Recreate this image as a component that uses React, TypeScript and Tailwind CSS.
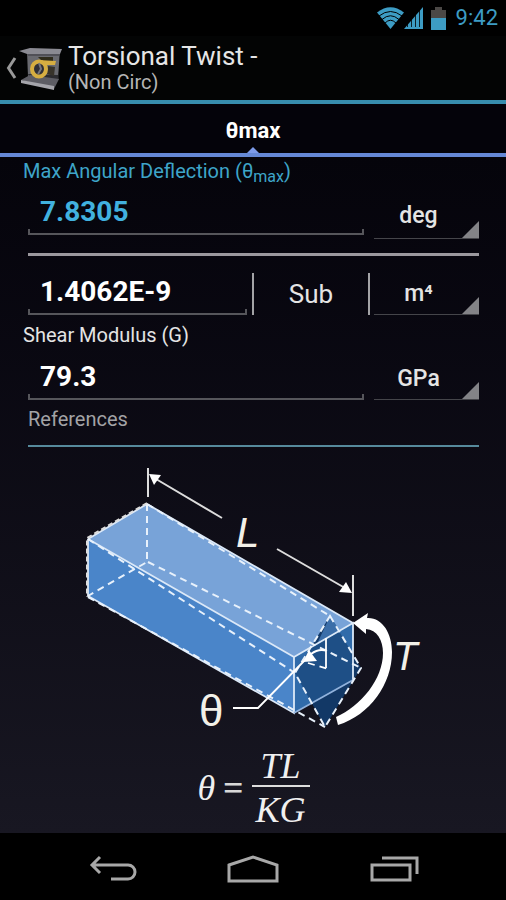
import React, { useState } from 'react';

const DASH = '7 5';

function StatusBar() {
  return (
    <div className="flex h-9 items-center justify-end bg-black pr-2 text-[#3d9cc4]">
      <svg width="27" height="22" viewBox="0 0 27 22" aria-hidden="true">
        <path d="M0 5.500 Q13.500 -5 27 5.500 L13.500 22 Z" fill="currentColor" />
        <g fill="none" stroke="#000" strokeWidth="1">
          <path d="M2 9 Q13.500 0 25 9" />
          <path d="M5 12.500 Q13.500 5 22 12.500" />
          <path d="M8 16 Q13.500 10.500 19 16" />
        </g>
      </svg>
      <svg width="19" height="22" viewBox="0 0 19 22" aria-hidden="true">
        <path d="M0 22L19 0V22Z" fill="currentColor" />
        <path d="M3.500 14V20M7.500 10V20M11.500 6V20M15.500 2V20" stroke="#000" strokeWidth="0.800" />
      </svg>
      <svg className="ml-2" width="15" height="23" viewBox="0 0 15 23" aria-hidden="true">
        <path d="M4 0H11V3H15V11H0V3H4Z" fill="#4b4846" />
        <path d="M0 11H15V23H0Z" fill="currentColor" />
      </svg>
      <span className="ml-[10px] text-[22px] leading-6">9:42</span>
    </div>
  );
}

function BeamIcon() {
  return (
    <svg width="44" height="46" viewBox="0 0 44 46" aria-hidden="true">
      <path d="M9 6L42 4L40 34L10 32Z" fill="#696a70" />
      <path d="M1 6L12 3L44 4L42 9L9 9Z" fill="#8a8a92" />
      <path d="M9 9L42 9L41 11L10 11Z" fill="#505057" />
      <path d="M10 29L40 30L41 35L12 33Z" fill="#2b2b2f" />
      <path d="M3 35L12 30L41 34L36 44Z" fill="#5d5d64" />
      <path d="M3 35L36 41V45L3 38Z" fill="#a5a5ab" />
      <path d="M20 12H35V16H24Z" fill="#2f2c1c" />
      <path d="M30 21L37 22L36 31L29 29Z" fill="#37332a" />
      <ellipse cx="21" cy="24" rx="7" ry="7.500" fill="#303036" stroke="#d6ae41" strokeWidth="4" />
      <path d="M20 15L38 16L37 20L26 20Z" fill="#d6ae41" />
      <path d="M21 18L23 24L20 29" fill="none" stroke="#77777d" strokeWidth="2" />
    </svg>
  );
}

function Header() {
  return (
    <header className="flex h-[68px] items-center border-b-4 border-[#378dae] bg-[#030404]">
      <a href="#" aria-label="Navigate up" className="flex items-center pl-[6px]">
        <svg width="12" height="24" viewBox="0 0 12 24" fill="none" stroke="#999" strokeWidth="3" aria-hidden="true">
          <path d="M9 2L2.500 12L9 22" />
        </svg>
        <BeamIcon />
      </a>
      <div className="ml-[6px]">
        <h1 className="text-[26px] leading-7 text-[#e6e6e6]">Torsional Twist -</h1>
        <p className="text-[20px] leading-6 text-[#b5b5b5]">(Non Circ)</p>
      </div>
    </header>
  );
}

function TabBar() {
  return (
    <div role="tablist" className="flex h-[53px] border-b-4 border-[#6588d6] bg-[#04030a]">
      <button role="tab" aria-selected="true" className="relative flex-1 pt-1 text-[22px] font-bold text-white">
        θmax
        <svg className="absolute bottom-0 left-1/2 -translate-x-1/2" width="12" height="6" viewBox="0 0 12 6" fill="#7d9bea" aria-hidden="true">
          <path d="M6 0L12 6H0Z" />
        </svg>
      </button>
    </div>
  );
}

type ValueInputProps = {
  id: string;
  value: string;
  onChange: (value: string) => void;
  label?: string;
  blue?: boolean;
};

function ValueInput({ id, value, onChange, label, blue }: ValueInputProps) {
  return (
    <div className="flex min-w-0 flex-1 flex-col">
      <input
        id={id}
        aria-label={label}
        value={value}
        onChange={e => onChange(e.target.value)}
        className={`h-11 w-full bg-transparent px-3 pt-2 text-[28px] font-bold outline-none ${blue ? 'text-[#41b1df]' : 'text-white'}`}
      />
      <div className="h-[6px] border-x-2 border-b-2 border-[#56565b]" />
    </div>
  );
}

function UnitSelect({ label, options }: { label: string; options: string[] }) {
  return (
    <div className="relative w-[105px] shrink-0 border-b border-[#45454a]">
      <select
        aria-label={label}
        className="h-full w-full appearance-none bg-transparent pt-[10px] pr-4 text-center text-[23px] font-medium text-[#e4e4e4] outline-none [text-align-last:center]"
      >
        {options.map(unit => (
          <option key={unit}>{unit}</option>
        ))}
      </select>
      <svg className="pointer-events-none absolute right-0 bottom-0" width="17" height="17" viewBox="0 0 17 17" fill="#838387" aria-hidden="true">
        <path d="M17 0V17H0Z" />
      </svg>
    </div>
  );
}

function TwistDiagram() {
  return (
    <svg width="347" height="274" viewBox="80 461 347 274" role="img" aria-label="Twisted rectangular bar">
      {/* faces */}
      <path d="M88 539L147 504L353 623L294 657Z" fill="#78a3d8" />
      <path d="M88 539L294 657V713L88 596Z" fill="#4a85c9" />
      <path d="M294 657L353 623V680L294 713Z" fill="#3670af" />

      {/* twisted end */}
      <path d="M330 616L361 668L325 727L295 673Z" fill="#123866" />
      <path d="M294 657L353 623V680L294 713Z" fill="#2a65a6" opacity="0.5" />
      <path d="M330 616L340 631L317 644Z" fill="#3b6ea9" />

      {/* solid edges */}
      <g fill="none" stroke="#dce9f8" strokeWidth="1.800">
        <path d="M88 539L147 504L353 623" />
        <path d="M88 539V596L294 713V657L88 539" />
        <path d="M294 657L353 623V680" />
        <path d="M294 713L353 680" stroke="#91b2dc" />
      </g>

      {/* dashed edges */}
      <g fill="none" stroke="#e8f1fb" strokeWidth="2" strokeDasharray={DASH}>
        <path d="M147 504V562L88 596" />
        <path d="M147 504L330 616" />
        <path d="M148 562L361 668" />
        <path d="M88 539L295 673" />
        <path d="M88 597L325 727" />
        <path d="M330 616L361 668L325 727L295 673Z" />
      </g>
      <path d="M147 503L87 538V597" fill="none" stroke="#ddd" strokeWidth="2" strokeDasharray="5 3" />

      {/* length dimension */}
      <g fill="none" stroke="#ddd" strokeWidth="2">
        <path d="M148 468V497M156 479L222 518" />
        <path d="M353 575V616M277 549L345 588" />
      </g>
      <path d="M149 474L161 475L154 485Z" fill="#fff" />
      <path d="M352 593L346 582L339 592Z" fill="#fff" />

      {/* angle */}
      <g fill="none" stroke="#fff" strokeWidth="1.800">
        <path d="M233 708H258L307 658" />
        <path d="M326 638V668M327 651Q319 648 311 654" />
        <path d="M308 663L328 669" strokeDasharray={DASH} />
      </g>
      <path d="M303 662L309 650L317 661Z" fill="#fff" />

      {/* torque */}
      <path d="M353 623L368 613L367 618C382 617 392 633 392 652C392 684 370 715 338 725L336 717C361 706 383 679 383 653C383 640 377 630 366 629L366 634Z" fill="#fff" />

      <g fill="#f2f0e8" className="font-['Liberation_Sans',sans-serif]">
        <text x="236" y="547" fontSize="42" fontStyle="italic">L</text>
        <text x="393" y="670" fontSize="40" fontStyle="italic">T</text>
        <text x="199" y="726" fontSize="44">θ</text>
      </g>
    </svg>
  );
}

function Formula() {
  return (
    <div className="mt-3 flex items-center gap-2 font-['Liberation_Serif',serif] text-[36px] leading-[38px] text-[#f0f0f0] italic">
      <span>θ</span>
      <span className="font-bold text-[#d8d8d8] not-italic">=</span>
      <span className="flex flex-col text-center">
        <span className="border-b-2 border-[#ddd] px-1">TL</span>
        <span className="px-1 pt-1">KG</span>
      </span>
    </div>
  );
}

function NavBar() {
  return (
    <nav className="flex h-[67px] shrink-0 items-center justify-center gap-[88px] bg-black pt-1">
      <button aria-label="Back">
        <svg width="50" height="28" viewBox="0 0 50 28" fill="none" stroke="#a8a8a8" strokeWidth="3" aria-hidden="true">
          <path d="M13 2L5 10L13 18M5 10H41A7 7 0 0 1 41 24H24" />
        </svg>
      </button>
      <button aria-label="Home">
        <svg width="54" height="30" viewBox="0 0 54 30" fill="none" stroke="#a8a8a8" strokeWidth="3" aria-hidden="true">
          <path d="M4 11L28 3L52 11V27H4Z" />
        </svg>
      </button>
      <button aria-label="Recent apps">
        <svg width="52" height="28" viewBox="0 0 52 28" fill="none" stroke="#a8a8a8" strokeWidth="3" aria-hidden="true">
          <path d="M5 10H43V25H5ZM15 3H50V19" />
        </svg>
      </button>
    </nav>
  );
}

export default function App() {
  const [deflection, setDeflection] = useState('7.8305');
  const [constant, setConstant] = useState('1.4062E-9');
  const [modulus, setModulus] = useState('79.3');

  return (
    <div className="flex min-h-screen flex-col bg-black font-[Roboto,sans-serif]">
      <StatusBar />
      <Header />
      <TabBar />

      <main className="flex flex-1 flex-col bg-linear-to-b from-[#05040b] to-[#181722] pr-[27px] pl-7">
        <label htmlFor="deflection" className="-ml-[5px] h-7 text-[20px] leading-7 text-[#3ea5c9]">
          Max Angular Deflection (θ<sub className="text-[16px] leading-none">max</sub>)
        </label>
        <div className="flex h-[54px] gap-[10px]">
          <ValueInput id="deflection" value={deflection} onChange={setDeflection} blue />
          <UnitSelect label="Deflection unit" options={['deg', 'rad']} />
        </div>

        <hr className="mt-[14px] border-t-3 border-[#9b989e]" />

        <div className="mt-[9px] flex">
          <ValueInput id="constant" label="Torsional constant" value={constant} onChange={setConstant} />
          <button className="mt-2 mr-1 ml-[5px] w-[118px] shrink-0 border-x-2 border-[#a3a3a6] text-[26px] text-[#e4e4e4]">
            Sub
          </button>
          <UnitSelect label="Torsional constant unit" options={['m⁴', 'mm⁴']} />
        </div>

        <label htmlFor="modulus" className="-ml-[5px] h-[35px] text-[20px] leading-10 text-[#e4e4e4]">
          Shear Modulus (G)
        </label>
        <div className="flex gap-[10px]">
          <ValueInput id="modulus" value={modulus} onChange={setModulus} />
          <UnitSelect label="Shear modulus unit" options={['GPa', 'MPa']} />
        </div>

        <h2 className="mt-[3px] border-b-2 border-[#568a9c] pb-[10px] text-[20px] leading-8 text-[#a3a3a6]">References</h2>

        <div className="flex flex-col items-center pt-[14px]">
          <TwistDiagram />
          <Formula />
        </div>
      </main>

      <NavBar />
    </div>
  );
}
